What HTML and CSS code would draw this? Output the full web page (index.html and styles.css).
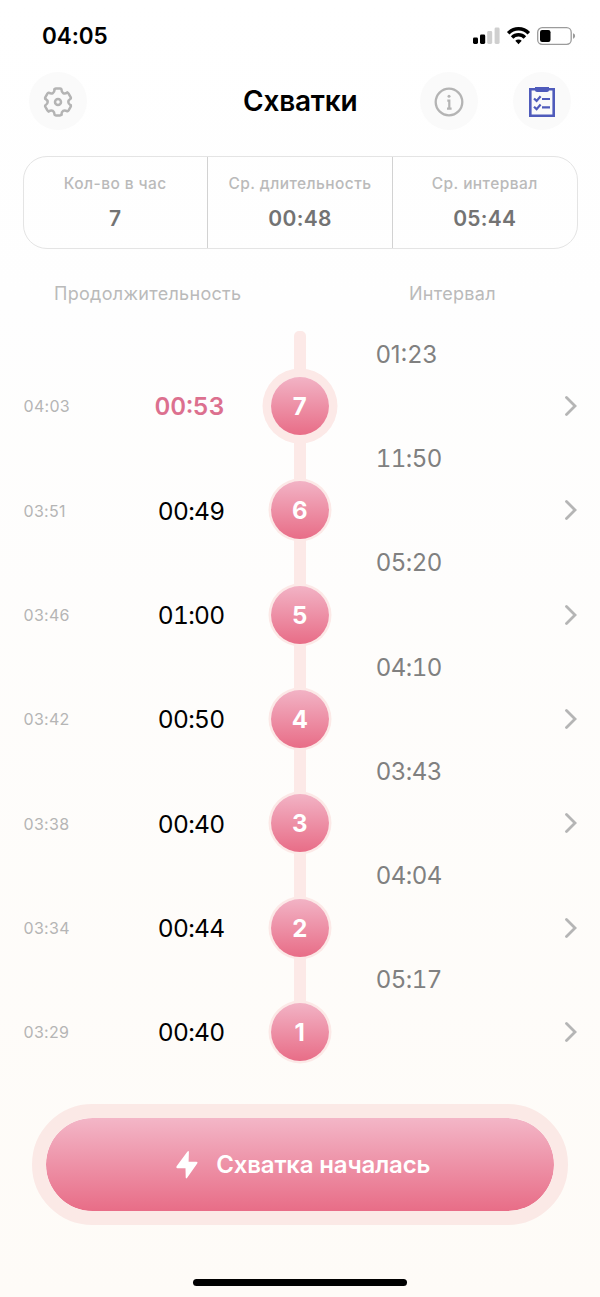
FILE: index.html
```html
<!DOCTYPE html>
<html lang="ru">
<head>
<meta charset="utf-8">
<title>Схватки</title>
<link rel="stylesheet" href="styles.css">
</head>
<body>
<div class="screen">
  <div class="status">
    <span class="clock">04:05</span>
    <svg class="status-icons" width="104" height="20" viewBox="0 0 104 20">
      <rect x="1" y="11.5" width="5" height="6.5" rx="1.4"/>
      <rect x="8" y="8.5" width="5.2" height="9.5" rx="1.4"/>
      <g fill="#cfcfcf"><rect x="15.2" y="5" width="5" height="13" rx="1.4"/><rect x="22.6" y="1.5" width="5" height="16.500" rx="1.4"/></g>
      <g fill="none" stroke="#000" stroke-width="3.500"><path d="M36.200 7.200a14.300 14.300 0 0 1 20.600 0"/><path d="M40.100 11.500a9 9 0 0 1 12.800 0"/></g>
      <path d="M43.300 14.800a4.600 4.600 0 0 1 6.400 0L46.500 18.200z"/>
      <rect x="65.700" y="1.700" width="33.500" height="16.600" rx="4.500" fill="none" stroke="#9b9b9b" stroke-width="1.300"/>
      <rect x="68" y="4" width="10.500" height="12" rx="2.200"/>
      <path d="M101 7.300c2.800.8 2.800 4.600 0 5.400z" fill="#9b9b9b"/>
    </svg>
  </div>

  <header class="header">
    <button class="round" aria-label="Настройки">
      <svg width="30" height="32" viewBox="0 0 30 32" fill="none" stroke="#b4b4b4" stroke-width="2.500" stroke-linejoin="round" stroke-linecap="round">
        <defs><path id="tooth" d="M11.600 3.150Q12 2.600 13 2.600h4q1 0 1.400.55C18.600 7.100 20.900 8.600 24.400 6.600"/></defs>
        <use href="#tooth"/><use href="#tooth" transform="rotate(60 15 16)"/><use href="#tooth" transform="rotate(120 15 16)"/><use href="#tooth" transform="rotate(180 15 16)"/><use href="#tooth" transform="rotate(240 15 16)"/><use href="#tooth" transform="rotate(300 15 16)"/>
        <circle cx="15" cy="16" r="3"/>
      </svg>
    </button>
    <h1 class="title">Схватки</h1>
    <button class="round info" aria-label="Информация">
      <svg width="30" height="30" viewBox="0 0 30 30" fill="none" stroke="#b4b4b4"><circle cx="15" cy="15" r="13.300" stroke-width="2.300"/><path d="M13.300 13.600h2v8M13 21.600h4.600" stroke-width="2.200"/><circle cx="15" cy="9.200" r="1.500" fill="#b4b4b4" stroke="none"/></svg>
    </button>
    <button class="round" aria-label="Список">
      <svg width="28" height="32" viewBox="0 0 28 32" fill="none" stroke="#4f5bbb"><path d="M2.300 3.300h23.400v26.400H2.300z" stroke-width="2.600"/><path d="M7 1h14v3q0 2-2 2H9Q7 6 7 4z" fill="#4f5bbb" stroke="none"/><path d="M6 12.500l2.600 2.400 4-4.600M6 20.700l2.600 2.400 4-4.600M14 13h8M14 21.300h8" stroke-width="2.200"/></svg>
    </button>
  </header>

  <section class="stats">
    <div class="stat"><span class="stat-label">Кол-во в час</span><span class="stat-value">7</span></div>
    <div class="stat"><span class="stat-label">Ср. длительность</span><span class="stat-value">00:48</span></div>
    <div class="stat"><span class="stat-label">Ср. интервал</span><span class="stat-value">05:44</span></div>
  </section>

  <div class="columns"><span class="col-duration">Продолжительность</span><span class="col-interval">Интервал</span></div>

  <main class="timeline">
    <div class="entry latest"><span class="interval">01:23</span><span class="time">04:03</span><span class="duration">00:53</span><span class="dot">7</span><svg class="chevron" viewBox="0 0 12 20"><path d="M1.500 1.500L10 10l-8.500 8.500"/></svg></div>
    <div class="entry"><span class="interval">11:50</span><span class="time">03:51</span><span class="duration">00:49</span><span class="dot">6</span><svg class="chevron" viewBox="0 0 12 20"><path d="M1.500 1.500L10 10l-8.500 8.500"/></svg></div>
    <div class="entry"><span class="interval">05:20</span><span class="time">03:46</span><span class="duration">01:00</span><span class="dot">5</span><svg class="chevron" viewBox="0 0 12 20"><path d="M1.500 1.500L10 10l-8.500 8.500"/></svg></div>
    <div class="entry"><span class="interval">04:10</span><span class="time">03:42</span><span class="duration">00:50</span><span class="dot">4</span><svg class="chevron" viewBox="0 0 12 20"><path d="M1.500 1.500L10 10l-8.500 8.500"/></svg></div>
    <div class="entry"><span class="interval">03:43</span><span class="time">03:38</span><span class="duration">00:40</span><span class="dot">3</span><svg class="chevron" viewBox="0 0 12 20"><path d="M1.500 1.500L10 10l-8.500 8.500"/></svg></div>
    <div class="entry"><span class="interval">04:04</span><span class="time">03:34</span><span class="duration">00:44</span><span class="dot">2</span><svg class="chevron" viewBox="0 0 12 20"><path d="M1.500 1.500L10 10l-8.500 8.500"/></svg></div>
    <div class="entry"><span class="interval">05:17</span><span class="time">03:29</span><span class="duration">00:40</span><span class="dot">1</span><svg class="chevron" viewBox="0 0 12 20"><path d="M1.500 1.500L10 10l-8.500 8.500"/></svg></div>
  </main>

  <button class="start">
    <svg width="24" height="30" viewBox="0 0 24 30" fill="#fff"><path d="M12.500 1.600Q14 .2 13.900 2.200L13.600 11.800H21.500Q23.300 12 22.200 13.600L12 28Q10.700 29.200 10.700 27.300L10.500 18.200H2.300Q.600 17.900 1.600 16.300z"/></svg>
    <span class="start-label">Схватка началась</span>
  </button>
  <div class="home"></div>
</div>
</body>
</html>
```
FILE: styles.css
```css
* { box-sizing: border-box; }
body { margin: 0; font-family: Inter, "Liberation Sans", sans-serif; }
button { border: 0; padding: 0; font: inherit; }
svg { display: block; flex: none; }

.screen {
  width: 600px;
  height: 1297px;
  display: flex;
  flex-direction: column;
  overflow: hidden;
  background: linear-gradient(#fff 0, #fefefe 300px, #fefbf7 1297px);
}

.status {
  height: 72px;
  padding: 0 24px 0 42px;
  display: flex;
  align-items: center;
  justify-content: space-between;
}
.clock { font-size: 22.5px; line-height: 26px; font-weight: 600; letter-spacing: -.1px; }

.header {
  height: 58px;
  padding: 0 29px;
  display: grid;
  grid-template-columns: 58px 1fr 58px 58px;
  align-items: center;
}
.round {
  width: 58px;
  height: 58px;
  padding-top: 1px;
  border-radius: 50%;
  background: #fafafa;
  display: grid;
  place-items: center;
}
.info { margin-left: -35px; }
.title {
  margin: 0 0 0 156px;
  font-size: 28px;
  line-height: 57px;
  font-weight: 600;
  letter-spacing: -.2px;
  white-space: nowrap;
}

.stats {
  height: 93px;
  margin: 26px 22.500px 0;
  border: 1.500px solid #e4e4e4;
  border-radius: 24px;
  display: grid;
  grid-template-columns: 183.500px 185px 1fr;
}
.stat {
  padding-top: 17px;
  display: flex;
  flex-direction: column;
  align-items: center;
}
.stat + .stat { border-left: 1px solid #d2d2d2; }
.stat-label { font-size: 15.500px; line-height: 20px; letter-spacing: .42px; font-weight: 500; color: #bababa; white-space: nowrap; }
.stat-value { margin-top: 12px; font-size: 21px; line-height: 26px; letter-spacing: .3px; font-weight: 600; color: #737373; }

.columns {
  height: 79px;
  padding: 33px 0 0 54px;
  display: flex;
  font-size: 18px;
  line-height: 24px;
  letter-spacing: .3px;
  color: #bababa;
}
.col-duration { width: 355px; }

.timeline { position: relative; z-index: 0; }
.timeline::before {
  content: "";
  position: absolute;
  z-index: -1;
  left: 294px;
  top: 3px;
  width: 12px;
  height: 700px;
  border-radius: 5px;
  background: #fce9e7;
}
.entry {
  height: 104.280px;
  padding: 0 23.500px 0 24px;
  display: grid;
  grid-template-columns: 90px 110.500px 150.500px 1fr 12px;
  grid-template-rows: 52.140px 52.140px;
  align-items: center;
}
.interval, .duration { font-variant-numeric: tabular-nums; line-height: 30px; }
.interval { grid-column: 4; grid-row: 1; padding: 1.500px 0 0 .7px; font-size: 24px; letter-spacing: -.5px; color: #808080; }
.latest .interval { font-variant-numeric: normal; letter-spacing: 0; }
.time { grid-column: 1; grid-row: 2; padding-top: .5px; margin-left: -.5px; font-size: 16px; letter-spacing: .3px; color: #b5b5b5; }
.duration { grid-column: 2; grid-row: 2; justify-self: end; padding-top: .5px; font-size: 24.500px; letter-spacing: -.7px; }
.latest .duration { font-weight: 600; letter-spacing: 0; color: #dc708f; }
.dot {
  grid-column: 3;
  grid-row: 2;
  justify-self: center;
  width: 58px;
  height: 58px;
  border-radius: 50%;
  background: linear-gradient(#f2b3c5, #e86d87);
  box-shadow: 0 0 0 2.500px #fce9e7;
  color: #fff;
  font-size: 24px;
  font-weight: 700;
  line-height: 60px;
  text-align: center;
}
.latest .dot { box-shadow: 0 0 0 8.500px #fce9e7; }
.chevron {
  grid-column: 5;
  grid-row: 2;
  width: 12px;
  height: 20px;
  fill: none;
  stroke: #b5b5b5;
  stroke-width: 2.800px;
  stroke-linecap: round;
}

.start {
  flex: none;
  width: 536px;
  height: 121px;
  margin: 46px auto 0;
  border: 14px solid #fbe9e6;
  border-radius: 61px;
  background: linear-gradient(#f3b6c7, #e86d87) padding-box;
  display: flex;
  align-items: center;
  justify-content: center;
  gap: 17.500px;
  padding: 1px 0 0 5px;
  color: #fff;
}
.start-label { font-size: 24px; letter-spacing: -.18px; font-weight: 600; white-space: nowrap; }
.home {
  width: 214px;
  height: 7px;
  margin: 54px auto 0;
  border-radius: 4px;
  background: #000;
}
```
